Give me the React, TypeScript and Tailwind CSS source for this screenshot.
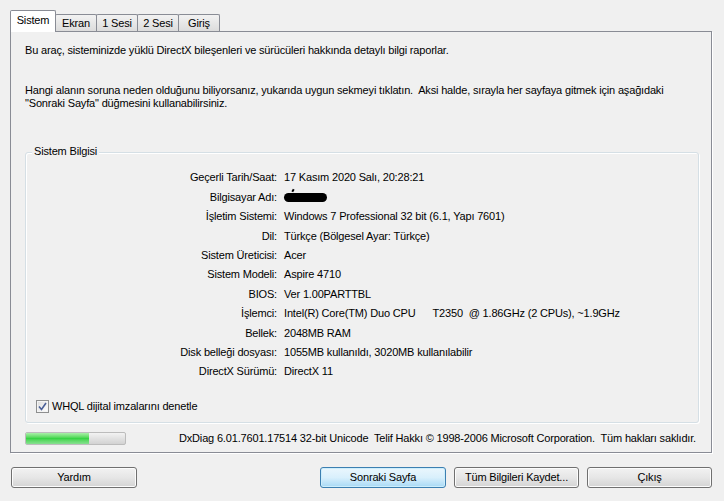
import type { FC, ReactNode } from 'react';

const rows: { label: string; value: ReactNode }[] = [
  { label: 'Geçerli Tarih/Saat:', value: '17 Kasım 2020 Salı, 20:28:21' },
  {
    label: 'Bilgisayar Adı:',
    value: (
      <span className="relative inline-block h-[9px] w-[43px] translate-y-[1px] rounded-full bg-black">
        <span className="absolute left-[8px] top-[-4px] h-[3px] w-[2px] rotate-[30deg] bg-black" />
      </span>
    ),
  },
  { label: 'İşletim Sistemi:', value: 'Windows 7 Professional 32 bit (6.1, Yapı 7601)' },
  { label: 'Dil:', value: 'Türkçe (Bölgesel Ayar: Türkçe)' },
  { label: 'Sistem Üreticisi:', value: 'Acer' },
  { label: 'Sistem Modeli:', value: 'Aspire 4710' },
  { label: 'BIOS:', value: 'Ver 1.00PARTTBL' },
  { label: 'İşlemci:', value: 'Intel(R) Core(TM) Duo CPU      T2350  @ 1.86GHz (2 CPUs), ~1.9GHz' },
  { label: 'Bellek:', value: '2048MB RAM' },
  { label: 'Disk belleği dosyası:', value: '1055MB kullanıldı, 3020MB kullanılabilir' },
  { label: 'DirectX Sürümü:', value: 'DirectX 11' },
];

const tabs = ['Sistem', 'Ekran', '1 Sesi', '2 Sesi', 'Giriş'];

const Button: FC<{ label: string; primary?: boolean; width: string }> = ({ label, primary, width }) => (
  <button
    type="button"
    className={
      primary
        ? `${width} h-[21px] rounded-[3px] border border-[#3c7fb1] bg-gradient-to-b from-[#eaf6fd] via-[#d9f0fc] to-[#a7d9f5] shadow-[inset_0_0_0_1px_#cdeefc] text-[11px] text-black`
        : `${width} h-[21px] rounded-[3px] border border-[#707070] bg-gradient-to-b from-[#f2f2f2] via-[#e6e6e6] to-[#d4d4d4] shadow-[inset_0_0_0_1px_#fcfcfc] text-[11px] text-black`
    }
  >
    {label}
  </button>
);

export default function App() {
  return (
    <div
      className="flex h-[501px] w-[724px] flex-col bg-[#f0f0f0] text-[11px] tracking-[-0.17px] text-black"
      style={{ fontFamily: '"Liberation Sans", Arial, sans-serif' }}
    >
      {/* tab strip */}
      <div className="flex h-[31px] items-end pl-[10px]">
        {tabs.map((tab, i) =>
          i === 0 ? (
            <div
              key={tab}
              className="relative z-10 -mb-px flex h-[22px] w-[46px] items-center justify-center rounded-t-[2px] border border-b-0 border-[#898c95] bg-white pb-[2px]"
            >
              {tab}
            </div>
          ) : (
            <div
              key={tab}
              className="-ml-px flex h-[17px] w-[42px] items-center justify-center rounded-t-[2px] border border-b-0 border-[#898c95] bg-gradient-to-b from-[#f2f2f2] to-[#dcdcdc] first:ml-0"
            >
              {tab}
            </div>
          ),
        )}
      </div>

      {/* tab page */}
      <div className="ml-[10px] flex h-[422px] w-[702px] flex-col border border-[#898c95] bg-[#f0f0f0] px-[14px] shadow-[1px_1px_0_#ffffff]">
        <p className="mt-[12px] leading-[13px]">
          Bu araç, sisteminizde yüklü DirectX bileşenleri ve sürücüleri hakkında detaylı bilgi raporlar.
        </p>
        <p className="mt-[27px] leading-[13px]">
          Hangi alanın soruna neden olduğunu biliyorsanız, yukarıda uygun sekmeyi tıklatın.&nbsp; Aksi halde, sırayla her sayfaya gitmek için aşağıdaki
          <br />
          "Sonraki Sayfa" düğmesini kullanabilirsiniz.
        </p>

        {/* group box */}
        <div className="relative mt-[42px] h-[271px] w-[674px] rounded-[3px] border border-[#d5dfe5] shadow-[inset_1px_1px_0_#ffffff,1px_1px_0_#ffffff]">
          <span className="absolute left-[6px] top-[-8px] bg-[#f0f0f0] px-[2px] leading-[13px]">Sistem Bilgisi</span>
          <div className="mt-[15px] flex flex-col">
            {rows.map((row) => (
              <div key={row.label} className="flex h-[19.4px] items-center">
                <span className="w-[252px] pr-[1px] text-right">{row.label}</span>
                <span className="ml-[6px] whitespace-pre">{row.value}</span>
              </div>
            ))}
          </div>
          <label className="mt-[19px] ml-[10px] flex items-center gap-[3px]">
            <span className="flex h-[13px] w-[13px] items-center justify-center border border-[#8e8f8f] bg-gradient-to-br from-[#dcdcdc] to-[#ffffff] shadow-[inset_0_0_0_1px_#f4f4f4]">
              <svg width="9" height="9" viewBox="0 0 9 9">
                <path d="M1 4.5 L3.5 7.5 L8 1" fill="none" stroke="#4a5f97" strokeWidth="1.6" />
              </svg>
            </span>
            <span className="leading-[13px]">WHQL dijital imzalarını denetle</span>
          </label>
        </div>

        {/* status line */}
        <div className="mt-[9px] flex items-center">
          <div className="relative h-[13px] w-[101px] overflow-hidden rounded-[2px] border border-[#bcbcbc] bg-gradient-to-b from-[#f3f3f3] via-[#e2e2e2] to-[#d2d2d2]">
            <div className="h-full w-[63px] bg-gradient-to-b from-[#a8f0a8] via-[#37d445] to-[#86e090]" />
          </div>
          <span className="ml-auto mr-[1px] whitespace-pre leading-[13px]">
            DxDiag 6.01.7601.17514 32-bit Unicode  Telif Hakkı © 1998-2006 Microsoft Corporation.  Tüm hakları saklıdır.
          </span>
        </div>
      </div>

      {/* buttons */}
      <div className="mt-[14px] flex pl-[11px] pr-[12px]">
        <Button label="Yardım" width="w-[126px]" />
        <div className="flex-1" />
        <div className="flex gap-[8px]">
          <Button label="Sonraki Sayfa" primary width="w-[126px]" />
          <Button label="Tüm Bilgileri Kaydet..." width="w-[125px]" />
          <Button label="Çıkış" width="w-[125px]" />
        </div>
      </div>
    </div>
  );
}
